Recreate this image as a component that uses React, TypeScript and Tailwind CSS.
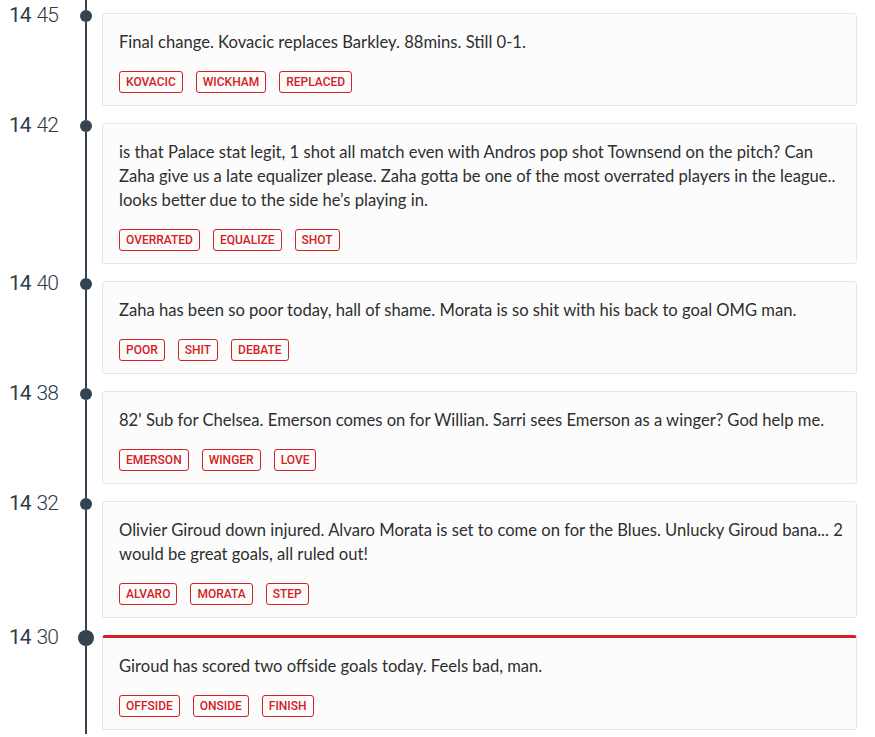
import React from 'react';

type Entry = {
  hour: string;
  minute: string;
  text: string;
  tags: string[];
  highlight?: boolean;
};

const entries: Entry[] = [
  {
    hour: '14',
    minute: '45',
    text: 'Final change. Kovacic replaces Barkley. 88mins. Still 0-1.',
    tags: ['Kovacic', 'Wickham', 'Replaced'],
  },
  {
    hour: '14',
    minute: '42',
    text: "is that Palace stat legit, 1 shot all match even with Andros pop shot Townsend on the pitch? Can Zaha give us a late equalizer please. Zaha gotta be one of the most overrated players in the league.. looks better due to the side he\u2019s playing in.",
    tags: ['Overrated', 'Equalize', 'Shot'],
  },
  {
    hour: '14',
    minute: '40',
    text: 'Zaha has been so poor today, hall of shame. Morata is so shit with his back to goal OMG man.',
    tags: ['Poor', 'Shit', 'Debate'],
  },
  {
    hour: '14',
    minute: '38',
    text: "82' Sub for Chelsea. Emerson comes on for Willian. Sarri sees Emerson as a winger? God help me.",
    tags: ['Emerson', 'Winger', 'Love'],
  },
  {
    hour: '14',
    minute: '32',
    text: 'Olivier Giroud down injured. Alvaro Morata is set to come on for the Blues. Unlucky Giroud bana... 2 would be great goals, all ruled out!',
    tags: ['Alvaro', 'Morata', 'Step'],
  },
  {
    hour: '14',
    minute: '30',
    text: 'Giroud has scored two offside goals today. Feels bad, man.',
    tags: ['Offside', 'Onside', 'Finish'],
    highlight: true,
  },
];

function TimelineRow({ entry }: { entry: Entry }) {
  return (
    <div className="flex items-stretch">
      {/* time label */}
      <div className="w-[78px] shrink-0 pl-[9px] pt-[3px]">
        <div className="flex items-baseline font-['Roboto',sans-serif] text-[21px] leading-[24px] tracking-[-1px] text-[#2f3b49]">
          <span className="font-normal">{entry.hour}</span>
          <span className="ml-[6px] font-light">{entry.minute}</span>
        </div>
      </div>

      {/* line + dot */}
      <div className="flex w-[16px] shrink-0 flex-col items-center">
        <div className={`w-[2px] bg-[#354351] ${entry.highlight ? 'h-[8px]' : 'h-[10px]'}`} />
        {entry.highlight ? (
          <div className="h-[16px] w-[16px] rounded-full bg-[#354351]" />
        ) : (
          <div className="h-[12px] w-[12px] rounded-full bg-[#354351]" />
        )}
        <div className="w-[2px] flex-1 bg-[#354351]" />
      </div>

      {/* card */}
      <div className="min-w-0 flex-1 pb-[4px] pl-[8px] pr-[18px] pt-[13px]">
        <div
          className={`rounded-[3px] border border-[#e6e6e6] bg-[#fcfcfc] pb-[12px] pl-[16px] pr-[12px] ${
            entry.highlight ? 'border-t-[3px] border-t-[#d42121]' : ''
          } pt-[16px]`}
        >
          <p className="font-['Lato',sans-serif] text-[16.6px] leading-[24px] text-[#2e2e2e]">{entry.text}</p>
          <div className="mt-[17px] flex gap-[13px]">
            {entry.tags.map((tag) => (
              <span
                key={tag}
                className="flex h-[22px] items-center rounded-[3px] border border-[#d42121] px-[6px] font-['Roboto',sans-serif] text-[12px] font-medium uppercase text-[#d42121]"
              >
                {tag}
              </span>
            ))}
          </div>
        </div>
      </div>
    </div>
  );
}

export default function App() {
  return (
    <div className="min-h-[737px] w-full bg-white">
      {entries.map((entry) => (
        <TimelineRow key={entry.minute} entry={entry} />
      ))}
    </div>
  );
}
